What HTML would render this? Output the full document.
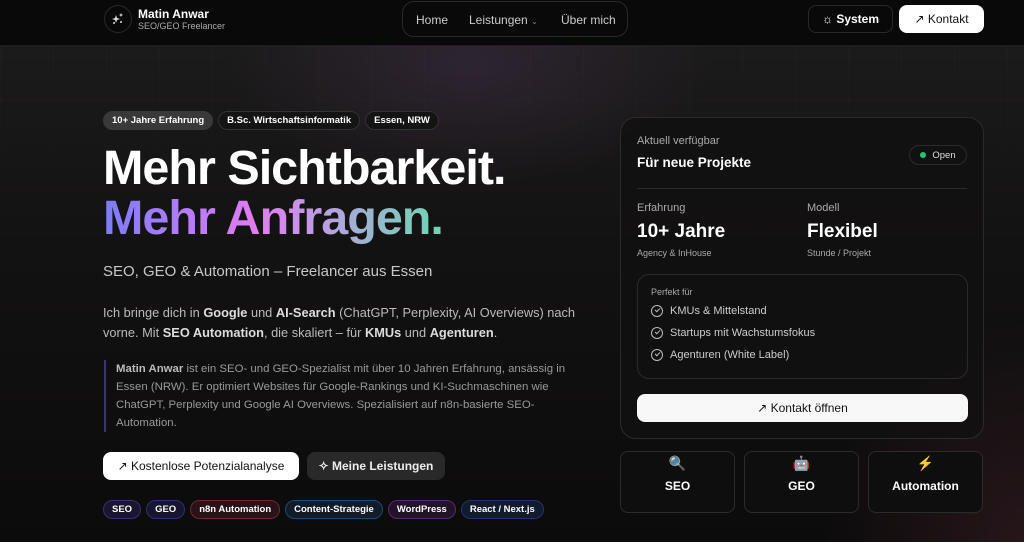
<!DOCTYPE html>
<html><head><meta charset="utf-8"><style>
*{box-sizing:border-box;margin:0;padding:0}
body{width:1024px;height:542px;overflow:hidden;font-family:"Liberation Sans",sans-serif;color:#fff;background:#0d0c0c;position:relative}
.bg{position:absolute;left:0;top:46px;width:1024px;height:496px;background:
radial-gradient(ellipse 240px 120px at 470px 20px,rgba(80,55,90,.35),transparent),
radial-gradient(ellipse 200px 220px at 1024px 496px,rgba(70,35,45,.45),transparent),
linear-gradient(180deg,#1c1b1b 0%,#131212 40%,#0c0b0b 100%);}
.grid{position:absolute;left:0;top:46px;width:1024px;height:220px;background-image:linear-gradient(90deg,rgba(255,255,255,.015) 1px,transparent 1px),linear-gradient(rgba(255,255,255,.015) 1px,transparent 1px);background-size:53px 53px;-webkit-mask:linear-gradient(#000,transparent)}
header{position:absolute;left:0;top:0;width:1024px;height:46px;background:#0a0909;border-bottom:1px solid #1e1d1d}
.logo{position:absolute;left:104px;top:5px;width:28px;height:28px;border-radius:50%;border:1px solid #2a2929;display:flex;align-items:center;justify-content:center}
.name{position:absolute;left:138px;top:7px;font-weight:bold;font-size:12px}
.sub{position:absolute;left:138px;top:21px;font-size:9px;color:#aaa}
.nav{position:absolute;left:402px;top:1px;width:226px;height:36px;border:1px solid #2a2929;border-radius:12px;font-size:12px;color:#ccc}
.nav span{position:absolute;top:11px}
.btn{position:absolute;border-radius:8px;font-size:12px;display:flex;align-items:center;justify-content:center;gap:8px}
.pill{display:inline-block;border-radius:10px;font-size:9.5px;font-weight:bold;padding:3px 8px;margin-right:5px;border:1px solid #333}
h1{position:absolute;left:103px;top:143px;font-size:48.5px;line-height:50px;font-weight:bold;letter-spacing:-1px}
.grad{background:linear-gradient(90deg,#7b7bff 0%,#c07cf8 30%,#e27cf0 45%,#b9a0e0 65%,#6ad8b0 100%);-webkit-background-clip:text;color:transparent}
.card{position:absolute;left:620px;top:117px;width:364px;height:322px;border:1px solid #2c2b2b;border-radius:16px;background:rgba(18,17,17,.85)}
.sm{position:absolute;border:1px solid #2c2b2b;border-radius:8px;width:115px;height:62px;top:451px;text-align:center;font-weight:bold;font-size:12px;background:#0f0e0e}
.chk{display:flex;align-items:center;gap:7px;font-size:11px;color:#ccc;height:22px}
.chk i{width:12px;height:12px;border:1.2px solid #bbb;border-radius:50%;display:inline-block;position:relative}
.chk i:after{content:"";position:absolute;left:3px;top:2px;width:4px;height:2px;border-left:1.2px solid #bbb;border-bottom:1.2px solid #bbb;transform:rotate(-45deg)}
</style></head><body>
<div class="bg"></div><div class="grid"></div>
<header>
<div class="logo"><svg width="14" height="14" viewBox="0 0 14 14" fill="#ddd"><path d="M5 3l1 3 3 1-3 1-1 3-1-3-3-1 3-1z"/><path d="M10 1l.6 1.4L12 3l-1.4.6L10 5l-.6-1.4L8 3l1.4-.6z"/><circle cx="3" cy="11" r="1"/><circle cx="10" cy="10" r="1"/></svg></div>
<div class="name">Matin Anwar</div><div class="sub">SEO/GEO Freelancer</div>
<div class="nav"><span style="left:13px">Home</span><span style="left:66px">Leistungen <small style="font-size:8px;color:#888">⌄</small></span><span style="left:158px">Über mich</span></div>
<div class="btn" style="left:808px;top:5px;width:85px;height:28px;border:1px solid #2a2929;font-weight:bold">☼ System</div>
<div class="btn" style="left:899px;top:5px;width:85px;height:28px;background:#fff;color:#111">↗ Kontakt</div>
</header>
<div style="position:absolute;left:103px;top:110px;white-space:nowrap">
<span class="pill" style="background:#3a3939;border-color:#3a3939">10+ Jahre Erfahrung</span><span class="pill" style="background:#151414">B.Sc. Wirtschaftsinformatik</span><span class="pill" style="background:#151414">Essen, NRW</span></div>
<h1>Mehr Sichtbarkeit.<br><span class="grad">Mehr Anfragen.</span></h1>
<div style="position:absolute;left:103px;top:263px;font-size:15px;color:#c8c8c8">SEO, GEO &amp; Automation – Freelancer aus Essen</div>
<div style="position:absolute;left:103px;top:303px;width:500px;font-size:12.8px;line-height:20px;color:#bbb">Ich bringe dich in <b style="color:#ddd">Google</b> und <b style="color:#ddd">AI-Search</b> (ChatGPT, Perplexity, AI Overviews) nach vorne. Mit <b style="color:#ddd">SEO Automation</b>, die skaliert – für <b style="color:#ddd">KMUs</b> und <b style="color:#ddd">Agenturen</b>.</div>
<div style="position:absolute;left:104px;top:360px;width:478px;border-left:2px solid #3a3570;padding-left:10px;font-size:11.4px;line-height:18px;color:#999">
<b style="color:#bbb">Matin Anwar</b> ist ein SEO- und GEO-Spezialist mit über 10 Jahren Erfahrung, ansässig in Essen (NRW). Er optimiert Websites für Google-Rankings und KI-Suchmaschinen wie ChatGPT, Perplexity und Google AI Overviews. Spezialisiert auf n8n-basierte SEO-Automation.</div>
<div class="btn" style="left:103px;top:452px;width:196px;height:28px;background:#fff;color:#111">↗ Kostenlose Potenzialanalyse</div>
<div class="btn" style="left:307px;top:452px;width:138px;height:28px;background:#2a2929;color:#eee;font-weight:bold">✧ Meine Leistungen</div>
<div style="position:absolute;left:103px;top:500px;white-space:nowrap;font-size:0">
<span class="pill" style="background:#1a1530;border-color:#3a2f70">SEO</span><span class="pill" style="background:#171530;border-color:#2f3070">GEO</span><span class="pill" style="background:#2a1216;border-color:#6a2a30">n8n Automation</span><span class="pill" style="background:#111c2a;border-color:#1f4a70">Content-Strategie</span><span class="pill" style="background:#22122a;border-color:#5a2a70">WordPress</span><span class="pill" style="background:#121a2e;border-color:#26336a">React / Next.js</span></div>
<div class="card">
<div style="position:absolute;left:16px;top:17px;font-size:11px;color:#aaa">Aktuell verfügbar</div>
<div style="position:absolute;left:16px;top:37px;font-size:13.5px;font-weight:bold">Für neue Projekte</div>
<div style="position:absolute;right:16px;top:27px;width:58px;height:20px;border:1px solid #2c2b2b;border-radius:10px;font-size:9.5px;color:#ddd;display:flex;align-items:center;justify-content:center;gap:6px"><span style="width:6px;height:6px;border-radius:50%;background:#22c57a"></span>Open</div>
<div style="position:absolute;left:16px;right:16px;top:70px;border-top:1px solid #2c2b2b"></div>
<div style="position:absolute;left:16px;top:84px;font-size:11px;color:#aaa">Erfahrung</div>
<div style="position:absolute;left:16px;top:103px;font-size:19px;font-weight:bold">10+ Jahre</div>
<div style="position:absolute;left:16px;top:130px;font-size:9px;color:#aaa">Agency &amp; InHouse</div>
<div style="position:absolute;left:186px;top:84px;font-size:11px;color:#aaa">Modell</div>
<div style="position:absolute;left:186px;top:103px;font-size:19px;font-weight:bold">Flexibel</div>
<div style="position:absolute;left:186px;top:130px;font-size:9px;color:#aaa">Stunde / Projekt</div>
<div style="position:absolute;left:16px;top:156px;width:331px;height:105px;border:1px solid #2c2b2b;border-radius:12px;padding:12px 13px">
<div style="font-size:9px;color:#aaa;margin-bottom:3px">Perfekt für</div>
<div class="chk"><i></i>KMUs &amp; Mittelstand</div>
<div class="chk"><i></i>Startups mit Wachstumsfokus</div>
<div class="chk"><i></i>Agenturen (White Label)</div></div>
<div class="btn" style="left:16px;top:276px;width:331px;height:28px;background:#f8f8f8;color:#111">↗ Kontakt öffnen</div>
</div>
<div class="sm" style="left:620px"><div style="font-size:14px;margin-top:3px">🔍</div><div style="margin-top:7px">SEO</div></div>
<div class="sm" style="left:744px"><div style="font-size:14px;margin-top:3px">🤖</div><div style="margin-top:7px">GEO</div></div>
<div class="sm" style="left:868px"><div style="font-size:14px;margin-top:3px;color:#f5c518">⚡</div><div style="margin-top:7px">Automation</div></div>
</body></html>
